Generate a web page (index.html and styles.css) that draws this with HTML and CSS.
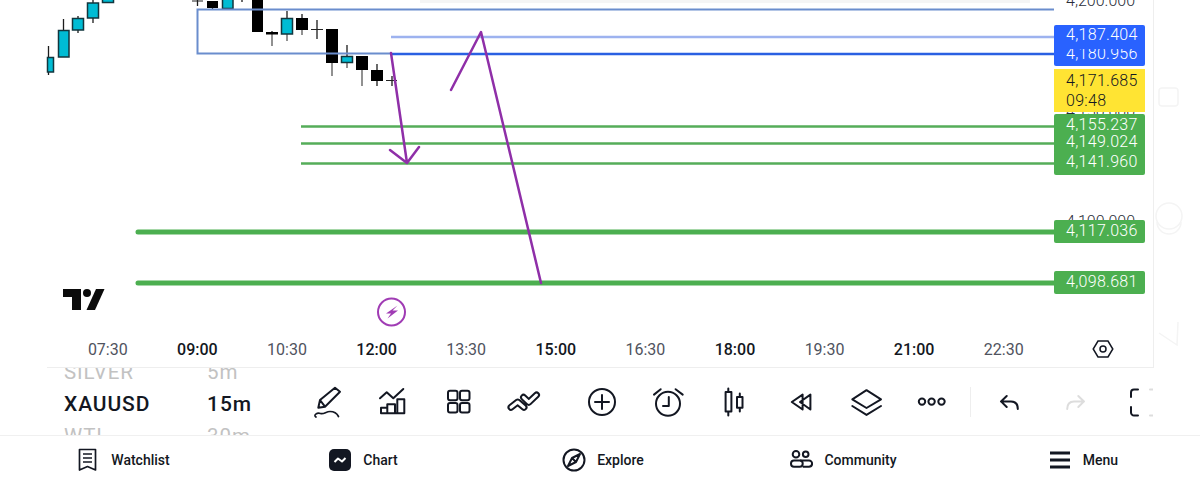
FILE: index.html
```html
<!DOCTYPE html>
<html lang="en">
<head>
<meta charset="utf-8">
<title>XAUUSD chart</title>
<link rel="stylesheet" href="styles.css">
</head>
<body>
<div class="app">
  <div class="workspace">
    <main class="chart">
      <div class="plot">
        <svg class="plot-svg" viewBox="0 0 1153 331" width="1153" height="331" aria-hidden="true">
          <rect class="ghost" x="420" y="0" width="610" height="3"/>
          <g class="wick">
            <path d="M48.5 46V75M63.5 19V30M78 16V33M93 0V23M197.5 0V6M212.5 8V10M242 0V2"/>
            <path d="M377 64V86M392 76V86M272 31V34M287 11V18M302 14V18M317 20V39M347 45V56"/>
            <path class="wick-soft" d="M272 34V46M287 34V41M302 30V35M332 63V76M347 63V68M362 70V86"/>
          </g>
          <g class="up">
            <rect x="47.5" y="57.5" width="6" height="14.500"/>
            <rect x="58.500" y="30.500" width="10.500" height="26.500"/>
            <rect x="72.500" y="18.500" width="11" height="11.500"/>
            <rect x="87.500" y="3" width="11" height="15"/>
            <rect x="102.500" y="-4" width="11" height="6.500"/>
            <rect x="222.500" y="-4" width="10.500" height="12.500"/>
            <rect x="281.500" y="18.500" width="11" height="15.500"/>
            <rect x="341.500" y="56.500" width="11" height="6"/>
          </g>
          <g class="down">
            <rect x="207" y="1" width="11" height="7"/>
            <rect x="252" y="-2" width="11" height="34"/>
            <rect x="266" y="32" width="12" height="2.500"/>
            <rect x="296" y="18" width="12" height="12"/>
            <rect x="326" y="29" width="12" height="34"/>
            <rect x="356" y="56" width="12" height="14"/>
            <rect x="371" y="70" width="12" height="11"/>
          </g>
          <path class="doji" d="M192 1H203M311 29.500H323M386 80.500H397"/>
          <path class="range" d="M1054 9.500H197.500V53.500H391"/>
          <path class="level-soft" d="M391 37H1054"/>
          <path class="level-blue" d="M391 54H1054"/>
          <path class="level-thin" d="M301 126.500H1054M301 143.500H1054M301 163.500H1054"/>
          <path class="level-thick" d="M138 232H1054M138 283H1054"/>
          <path class="pen" d="M391 53L407 163M390 150L407 163L419 147M451 90L481 32L541 283"/>
          <g class="logo">
            <path d="M63 289H81V310H72V297H63Z"/>
            <circle cx="87" cy="293" r="4"/>
            <path d="M96 289H104.500L95 310H86.500Z"/>
          </g>
          <circle class="bolt-ring" cx="391.500" cy="312" r="13.500"/>
          <path class="bolt" d="M397.500 305.500L386 313.500H391L387.500 318.500L398 310.500H392.500Z"/>
        </svg>
        <span class="axis-label axis-200">4,200.000</span>
        <span class="axis-label axis-150">4,150.000</span>
        <span class="axis-label axis-100">4,100.000</span>
        <span class="tag tag-blue tag-180">4,180.956</span>
        <span class="tag tag-blue tag-187">4,187.404</span>
        <span class="tag tag-green tag-155">4,155.237</span>
        <span class="tag tag-green tag-149">4,149.024</span>
        <span class="tag tag-green tag-141">4,141.960</span>
        <span class="tag tag-green tag-117">4,117.036</span>
        <span class="tag tag-green tag-098">4,098.681</span>
        <div class="tag-last"><span>4,171.685</span><span>09:48</span></div>
      </div>
      <div class="time-axis">
        <span>07:30</span><span class="major">09:00</span><span>10:30</span><span class="major">12:00</span><span>13:30</span><span class="major">15:00</span><span>16:30</span><span class="major">18:00</span><span>19:30</span><span class="major">21:00</span><span>22:30</span>
        <svg class="hex" viewBox="0 0 24 24" width="24" height="24" aria-hidden="true"><path d="M7 4L17 4L21.800 12L17 20H7L2.200 12Z"/><circle cx="12" cy="12" r="3"/></svg>
      </div>
    </main>
    <aside class="gutter">
      <svg viewBox="0 0 46 367" width="46" height="367" aria-hidden="true">
        <rect x="5" y="88" width="19" height="18" rx="3"/>
        <circle cx="15" cy="216" r="13"/>
        <path d="M3 222A12 12 0 0 0 27 222"/>
        <path d="M5 333L23 345L24 322"/>
      </svg>
    </aside>
  </div>

  <section class="toolbar">
    <div class="picker symbols">
      <span class="faded">SILVER</span>
      <span class="current">XAUUSD</span>
      <span class="faded">WTI</span>
    </div>
    <div class="picker intervals">
      <span class="faded">5m</span>
      <span class="current">15m</span>
      <span class="faded">30m</span>
    </div>
    <div class="tools tools-a">
      <svg class="icon" viewBox="0 0 32 32"><path d="M6.300 21.700L8 14L23 1.700L28 5.700L13 20.700ZM8 14L13 20.700"/><path class="thin" d="M4 31C1 29 5 26.500 8.500 27.500C12 28.500 14 25.500 18 25.500C22 25.500 25 27.500 26.500 30.500"/></svg>
      <svg class="icon" viewBox="0 0 32 32"><path d="M3 12.300L9.700 6.300L16.300 12.300L26.300 3"/><path d="M4 27.300V21.700H10.300V27.300ZM10.300 27.300V18.300H18V27.300ZM20.300 27.300V13.300H27.300V27.300ZM4 27.300H27.300"/></svg>
      <svg class="icon" viewBox="0 0 32 32"><rect x="6" y="4.700" width="9.500" height="9.500" rx="2"/><rect x="18" y="4.700" width="9.500" height="9.500" rx="2"/><rect x="6" y="17" width="9.500" height="9.500" rx="2"/><rect x="18" y="17" width="9.500" height="9.500" rx="2"/></svg>
      <svg class="icon" viewBox="0 0 32 32"><path class="band" d="M4 21.300L10.700 16L17 21.300M16.500 11.300L21.800 16.300L29.500 9"/><path class="band-in" d="M4 21.300L10.700 16L17 21.300M16.500 11.300L21.800 16.300L29.500 9"/></svg>
    </div>
    <div class="tools tools-b">
      <svg class="icon" viewBox="0 0 32 32"><circle cx="16" cy="16" r="13"/><path d="M16 9V23M9 16H23"/></svg>
      <svg class="icon" viewBox="0 0 32 32"><circle cx="16" cy="17.700" r="12"/><path d="M16.800 11V20H11M2 8.600L8.700 3.200M23.600 3.200L30.700 8.600"/></svg>
      <svg class="icon" viewBox="0 0 32 32"><path d="M7.600 5.900H13.400V25.500H7.600ZM10.300 2.500V5.900M10.300 25.500V29.500M19 11H24.500V21.800H19ZM21.800 7.600V11M21.800 21.800V25.500"/></svg>
      <svg class="icon" viewBox="0 0 32 32"><path d="M7.800 16L18.600 8.600V23.500ZM16 16L26.400 8.600V23.500Z"/></svg>
      <svg class="icon" viewBox="0 0 32 32"><path d="M2.300 13.300L16.500 4.200L31 13.300L16.500 22ZM2.300 20L16.500 28.900L31 20"/></svg>
      <svg class="icon" viewBox="0 0 32 32"><circle cx="6" cy="15.600" r="3.200"/><circle cx="15.600" cy="15.600" r="3.200"/><circle cx="25.500" cy="15.600" r="3.200"/></svg>
    </div>
    <div class="divider"></div>
    <div class="tools tools-c">
      <svg class="icon" viewBox="0 0 32 32"><path d="M13.700 10L8 15.400L13.700 21M8 15.400H18C22 15.400 24.800 18 24.800 23"/></svg>
      <svg class="icon muted" viewBox="0 0 32 32"><path d="M18.300 10L24 15.400L18.300 21M24 15.400H14C10 15.400 7.200 18 7.200 23"/></svg>
      <svg class="icon" viewBox="0 0 32 32"><path d="M11 3.500H7A3 3 0 0 0 4 6.500V11M4 21V26.500A3 3 0 0 0 7 29.500H11"/><path class="muted-line" d="M23 3.500H26M23 29.500H26"/></svg>
    </div>
  </section>

  <nav class="tabbar">
    <a class="tab"><svg class="tab-icon line" viewBox="0 0 24 24"><path d="M3.500 1.500H19.500V22L11.500 18.500L3.500 22ZM7 6H16M7 10H16M7 14H16"/></svg>Watchlist</a>
    <a class="tab"><svg class="tab-icon solid" viewBox="0 0 24 24"><rect x="1" y="1" width="22" height="22" rx="5"/><path d="M6.500 14L10 10.500L14 13.500L17.500 10"/></svg>Chart</a>
    <a class="tab"><svg class="tab-icon" viewBox="0 0 24 24"><circle cx="12" cy="12" r="10.500"/><path d="M18 6L14 14L6 18L10 10ZM10 10L14 14"/></svg>Explore</a>
    <a class="tab"><svg class="tab-icon" viewBox="0 0 24 24"><circle cx="7" cy="6.300" r="3.300"/><circle cx="16.700" cy="6.300" r="2.800"/><rect x="2" y="12.500" width="11.700" height="6.200" rx="3"/><path d="M13.700 18.700H20A3 3 0 0 0 20 12.500H11"/></svg>Community</a>
    <a class="tab"><svg class="tab-icon menu" viewBox="0 0 24 24"><path d="M2 5H22M2 12H22M2 19H22"/></svg>Menu</a>
  </nav>
</div>
</body>
</html>
```

FILE: styles.css
```css
* { box-sizing: border-box; }
html, body { margin: 0; padding: 0; background: #fff; }
body { font-family: Roboto, "Liberation Sans", sans-serif; color: #131722; }
.app { width: 1200px; height: 484px; overflow: hidden; display: flex; flex-direction: column; }

.workspace { display: flex; height: 368px; flex: none; }
.chart { width: 1154px; border-right: 1px solid #eeeeee; display: flex; flex-direction: column; }
.plot { position: relative; height: 331px; flex: none; }
.plot-svg { display: block; }
.gutter { flex: 1; }
.gutter svg { display: block; fill: none; stroke: #f4f4f4; stroke-width: 1.500; }

.ghost { fill: #f5f5f5; }
.wick path { fill: none; stroke: #1c1c1c; stroke-width: 1.300; }
.wick .wick-soft { stroke: #6e6e6e; stroke-width: 1.500; }
.up rect { fill: #00bcd4; stroke: #12363e; stroke-width: 1.500; }
.down rect { fill: #000; }
.doji { fill: none; stroke: #222; stroke-width: 1.200; }
.range { fill: none; stroke: #6a8dcd; stroke-width: 2; }
.level-soft { fill: none; stroke: #9db2ef; stroke-width: 2.500; }
.level-blue { fill: none; stroke: #2a60e2; stroke-width: 2.500; }
.level-thin { fill: none; stroke: #55ad59; stroke-width: 2.500; }
.level-thick { fill: none; stroke: #4caf50; stroke-width: 5; stroke-linecap: round; }
.pen { fill: none; stroke: #8f2fa8; stroke-width: 2.500; stroke-linecap: round; stroke-linejoin: round; }
.logo { fill: #0b0b0b; }
.bolt-ring { fill: none; stroke: #a03cb4; stroke-width: 2; }
.bolt { fill: #a03cb4; }

.axis-label { position: absolute; left: 1066px; font-size: 16px; font-weight: 300; line-height: 20px; color: #2a2e39; white-space: nowrap; }
.axis-200 { top: -9px; }
.axis-150 { top: 102px; }
.axis-100 { top: 212px; }

.tag { position: absolute; left: 1054px; width: 91px; height: 23px; padding-left: 12px; font-size: 16px; font-weight: 300; letter-spacing: .3px; line-height: 21px; color: #fff; border-radius: 2px; white-space: nowrap; }
.tag-blue { background: #2962ff; }
.tag-green { background: #4caf50; }
.tag-187 { top: 25px; height: 24px; border-radius: 2px 2px 0 0; line-height: 20px; }
.tag-180 { top: 43px; line-height: 21px; border-radius: 0 0 2px 2px; }
.tag-155 { top: 114px; }
.tag-149 { top: 131px; }
.tag-141 { top: 151px; height: 24px; }
.tag-117 { top: 220px; }
.tag-098 { top: 271px; }
.tag-last { position: absolute; left: 1054px; top: 69px; width: 91px; height: 43px; padding: 0 0 0 12px; background: #ffe433; color: #131722; font-size: 16px; font-weight: 300; letter-spacing: .3px; line-height: 20px; display: flex; flex-direction: column; justify-content: center; }

.time-axis { flex: 1; margin-left: 47px; border-bottom: 1px solid #eeeeee; display: grid; grid-template-columns: repeat(11, 89.6px) 1fr; align-items: center; padding-left: 16px; font-size: 16px; color: #50535e; }
.time-axis span { text-align: center; }
.time-axis .major { color: #131722; font-weight: 500; }
.hex { justify-self: end; margin-right: 38px; fill: none; stroke: #131722; stroke-width: 1.500; }

.toolbar { height: 67px; flex: none; width: 1153px; overflow: hidden; display: flex; align-items: center; }
.picker { height: 67px; padding-top: 5px; overflow: hidden; display: flex; flex-direction: column; justify-content: center; flex: none; }
.picker span { line-height: 32px; height: 32px; flex: none; }
.symbols { width: 143px; margin-left: 64px; letter-spacing: .9px; }
.intervals { width: 105px; letter-spacing: 1px; }
.faded { color: #c2c2c2; font-size: 20.500px; }
.current { color: #131722; font-size: 21px; font-weight: 500; }

.tools { display: flex; flex: none; }
.tools-a { gap: 33px; }
.tools-b { gap: 34px; margin-left: 47px; }
.tools-c { gap: 35px; margin-left: 22px; }
.divider { width: 1px; height: 30px; background: #eeeeee; margin-left: 22px; flex: none; }
.icon { width: 32px; height: 32px; flex: none; overflow: visible; fill: none; stroke: #131722; stroke-width: 2; stroke-linejoin: round; stroke-linecap: round; }
.icon .thin { stroke-width: 1.700; }
.icon.muted { stroke: #dddddd; }
.icon .muted-line { stroke: #dddddd; }
.icon .band { stroke-width: 7; }
.icon .band-in { stroke: #fff; stroke-width: 3; }

.tabbar { height: 49px; flex: none; padding-left: 3px; border-top: 1px solid #f0f0f0; display: grid; grid-template-columns: repeat(5, 240px); }
.tab { display: flex; align-items: center; justify-content: center; gap: 11px; font-size: 14px; font-weight: 500; color: #131722; }
.tab-icon { width: 24px; height: 24px; flex: none; fill: none; stroke: #131722; stroke-width: 2; stroke-linejoin: round; }
.tab-icon.line { stroke-width: 1.700; }
.tab-icon.solid rect { fill: #131722; stroke: none; }
.tab-icon.solid path { stroke: #fff; stroke-width: 2; }
.tab-icon.menu { stroke-width: 3; }
```
